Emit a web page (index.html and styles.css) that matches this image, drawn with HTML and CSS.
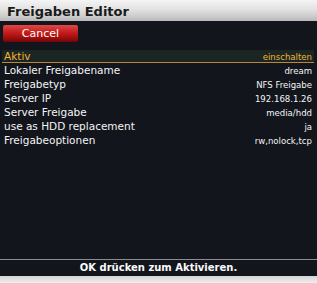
FILE: index.html
```html
<!DOCTYPE html>
<html lang="de">
<head>
    <meta charset="UTF-8">
    <title>Freigaben Editor</title>
    <link rel="stylesheet" href="styles.css">
</head>
<body>
    <div class="window">
        <div class="title-bar">Freigaben Editor</div>

        <div class="content">
            <div class="buttons">
                <div class="btn-red">Cancel</div>
            </div>

            <!-- config list -->
            <div class="list">
                <div class="row selected">
                    <span class="label">Aktiv</span>
                    <span class="value">einschalten</span>
                </div>
                <div class="row">
                    <span class="label">Lokaler Freigabename</span>
                    <span class="value">dream</span>
                </div>
                <div class="row">
                    <span class="label">Freigabetyp</span>
                    <span class="value">NFS Freigabe</span>
                </div>
                <div class="row">
                    <span class="label">Server IP</span>
                    <span class="value">192.168.1.26</span>
                </div>
                <div class="row">
                    <span class="label">Server Freigabe</span>
                    <span class="value">media/hdd</span>
                </div>
                <div class="row">
                    <span class="label">use as HDD replacement</span>
                    <span class="value">ja</span>
                </div>
                <div class="row">
                    <span class="label">Freigabeoptionen</span>
                    <span class="value">rw,nolock,tcp</span>
                </div>
            </div>
        </div>

        <div class="status">OK drücken zum Aktivieren.</div>
        <div class="bottom-bar"></div>
    </div>
</body>
</html>
```

FILE: styles.css
```css
body {
    margin: 0;
    font-family: "DejaVu Sans", sans-serif;
    background: #12151c;
}
.window {
    width: 317px;
    height: 283px;
    display: flex;
    flex-direction: column;
    background: #12151c;
}
.title-bar {
    height: 21px;
    line-height: 23px;
    padding-left: 7px;
    font-size: 13px;
    font-weight: bold;
    color: #1a1a1a;
    background: linear-gradient(#f4f4f4, #e2e2e2 45%, #cacaca 80%, #b8b8b8);
}
.content {
    flex: 1;
    padding: 4px 3px 0 3px;
}
.buttons {
    height: 17px;
    margin-bottom: 8px;
}
.btn-red {
    width: 75px;
    height: 17px;
    line-height: 17px;
    text-align: center;
    font-size: 11px;
    color: #fff;
    border-radius: 2px;
    background: linear-gradient(#e04848, #c41c1c 45%, #a00e0e 75%, #6e0606);
}
.list {
    margin-left: -1px;
}
.row {
    display: flex;
    justify-content: space-between;
    align-items: baseline;
    height: 14px;
    line-height: 14px;
    padding: 0 2px 0 2px;
    color: #f4f4f4;
}
.row .label {
    font-size: 10.5px;
}
.row .value {
    font-family: "DejaVu Sans Condensed", "DejaVu Sans", sans-serif;
    font-size: 9.5px;
}
.row.selected {
    height: 12px;
    line-height: 12px;
    color: #f2b43a;
    background: #1b2521;
    border-bottom: 1px solid #b8883a;
}
.status {
    height: 16px;
    line-height: 16px;
    text-align: center;
    font-size: 10px;
    font-weight: bold;
    color: #fafafa;
    border-top: 1px solid #8a8c90;
    background: #12151c;
}
.bottom-bar {
    height: 7px;
    background: linear-gradient(#d4d4d4, #eeeeee);
}
```
